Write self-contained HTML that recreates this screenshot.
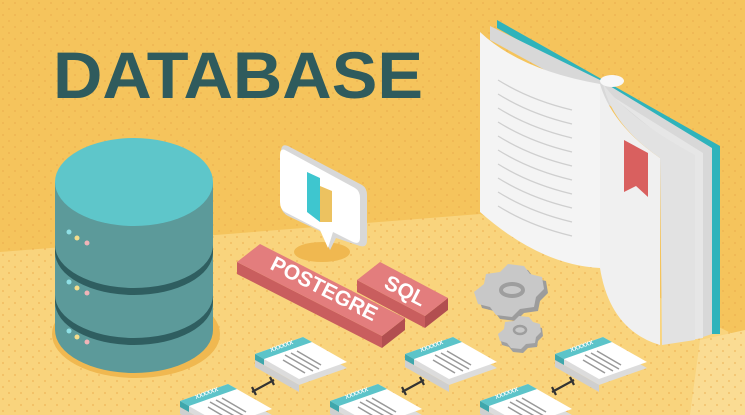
<!DOCTYPE html>
<html><head><style>html,body{margin:0;padding:0;width:745px;height:415px;overflow:hidden}svg{display:block;overflow:hidden}</style></head><body>
<svg width="745" height="415" viewBox="0 0 745 415" xmlns="http://www.w3.org/2000/svg">
<defs>
<pattern id="dots" width="12" height="12" patternUnits="userSpaceOnUse"><circle cx="3" cy="3" r="1.1" fill="#e9a94a" opacity="0.45"/><circle cx="9" cy="9" r="1.1" fill="#e9a94a" opacity="0.45"/></pattern>
<g id="card">
<polygon points="0,0 48,-17 92,8 44,25" fill="#dcdcdc"/>
<polygon points="0,0 44,25 44,32 0,7" fill="#cfcfcf"/>
<polygon points="0,-6 48,-23 92,2 44,19" fill="#ffffff"/>
<polygon points="0,-6 48,-23 57,-18 9,-1" fill="#5cc4c9"/>
<polygon points="0,-6 9,-1 9,5 0,0" fill="#3fa7ac"/>
<text x="0" y="0" transform="translate(16,-8) rotate(-20)" font-family="Liberation Sans,sans-serif" font-size="6" fill="#fff" font-weight="bold">XXXXXX</text>
<g stroke="#999" stroke-width="1.5"><line x1="28" y1="0" x2="50" y2="13"/><line x1="30" y1="-5" x2="58" y2="11"/><line x1="36" y1="-7" x2="64" y2="9"/><line x1="42" y1="-9" x2="66" y2="5"/></g>
</g>
</defs>
<rect width="745" height="415" fill="#f5c45c"/>
<polygon points="0,252 480,214 600,268 745,340 745,415 0,415" fill="#f9d47d"/>
<polygon points="700,340 745,330 745,415 690,415" fill="#fadc93"/>
<rect width="745" height="415" fill="url(#dots)"/>
<text x="53" y="98" font-family="Liberation Sans,sans-serif" font-weight="bold" font-size="66" fill="#2f5b5d" textLength="370" lengthAdjust="spacingAndGlyphs">DATABASE</text>
<ellipse cx="136" cy="334" rx="84" ry="44" fill="#f0b850"/>
<path d="M55,182 L55,330 A79,43 0 0 0 213,330 L213,182 Z" fill="#5c9a9a"/>
<path d="M55,245 A79,43 0 0 0 213,245 L213,252 A79,43 0 0 1 55,252 Z" fill="#2f5e60"/>
<path d="M55,295 A79,43 0 0 0 213,295 L213,302 A79,43 0 0 1 55,302 Z" fill="#2f5e60"/>
<ellipse cx="134" cy="182" rx="79" ry="44" fill="#5ec6ca"/>
<g><circle cx="69" cy="232" r="2.5" fill="#8fe0e6"/><circle cx="77" cy="238" r="2.5" fill="#f4dd8c"/><circle cx="87" cy="243" r="2.5" fill="#f0b4b8"/>
<circle cx="69" cy="282" r="2.5" fill="#8fe0e6"/><circle cx="77" cy="288" r="2.5" fill="#f4dd8c"/><circle cx="87" cy="293" r="2.5" fill="#f0b4b8"/>
<circle cx="69" cy="331" r="2.5" fill="#8fe0e6"/><circle cx="77" cy="337" r="2.5" fill="#f4dd8c"/><circle cx="87" cy="342" r="2.5" fill="#f0b4b8"/></g>
<ellipse cx="322" cy="252" rx="28" ry="10" fill="#f0b850"/>
<path d="M288,146 L362,185 Q367,188 367,195 L367,240 Q367,248 360,246 L336,238 L330,250 L322,232 L288,216 Q281,212 281,205 L281,152 Q281,143 288,146 Z" fill="#d8d8d8"/>
<path d="M285,150 L355,188 Q360,191 360,198 L360,238 Q360,245 353,242 L333,232 L328,248 L320,230 L285,212 Q280,209 280,202 L280,155 Q280,148 285,150 Z" fill="#ffffff"/>
<polygon points="307,172 320,178 320,222 307,212" fill="#3ec6cf"/>
<polygon points="320,186 332,191 332,222 320,222" fill="#ecc260"/>
<polygon points="237,262 382,336 382,348 237,274" fill="#c95e5e"/>
<polygon points="382,336 405,318 405,330 382,348" fill="#b24f50"/>
<polygon points="237,262 260,244 405,318 382,336" fill="#e37d7d"/>
<text transform="translate(321,295) rotate(27)" text-anchor="middle" font-family="Liberation Sans,sans-serif" font-weight="bold" font-size="21" fill="#fff">POSTEGRE</text>
<polygon points="357,280 425,316 425,328 357,292" fill="#c95e5e"/>
<polygon points="425,316 448,298 448,310 425,328" fill="#b24f50"/>
<polygon points="357,280 380,262 448,298 425,316" fill="#e37d7d"/>
<text transform="translate(402,297) rotate(27)" text-anchor="middle" font-family="Liberation Sans,sans-serif" font-weight="bold" font-size="21" fill="#fff">SQL</text>
<path d="M478,296 l10,-8 l2,-10 l14,-2 l8,-8 l16,2 l6,8 l12,3 l2,12 l-8,8 l-2,10 l-14,2 l-8,8 l-16,-2 l-6,-8 l-12,-3 z" fill="#9c9c9c"/>
<path d="M474,292 l10,-8 l2,-10 l14,-2 l8,-8 l16,2 l6,8 l12,3 l2,12 l-8,8 l-2,10 l-14,2 l-8,8 l-16,-2 l-6,-8 l-12,-3 z" fill="#c8c8c8"/>
<ellipse cx="512" cy="290" rx="11" ry="6" fill="none" stroke="#9e9e9e" stroke-width="4"/>
<path d="M500,338 l6,-5 l1,-7 l9,-1 l5,-5 l10,1 l4,5 l7,2 l1,8 l-5,5 l-1,6 l-9,1 l-5,5 l-10,-1 l-4,-5 l-7,-2 z" fill="#a0a0a0"/>
<path d="M498,334 l6,-5 l1,-7 l9,-1 l5,-5 l10,1 l4,5 l7,2 l1,8 l-5,5 l-1,6 l-9,1 l-5,5 l-10,-1 l-4,-5 l-7,-2 z" fill="#c8c8c8"/>
<ellipse cx="520" cy="330" rx="6" ry="4" fill="none" stroke="#9e9e9e" stroke-width="2.5"/>
<polygon points="497,20 720,146 720,334 712,334 712,150 497,28" fill="#2fb3bb"/>
<polygon points="490,26 600,80 712,148 712,334 700,338 700,158 600,100 490,40" fill="#d8d8d8"/>
<polygon points="610,95 703,153 703,338 690,340 690,160" fill="#e6e6e6"/>
<path d="M480,32 Q520,70 600,84 L600,268 Q540,265 480,212 Z" fill="#f4f4f4"/>
<g stroke="#cfcfcf" stroke-width="1.3" fill="none">
<path d="M498,80 Q530,100 572,110"/><path d="M498,94 Q530,114 572,124"/><path d="M498,108 Q530,128 572,138"/><path d="M498,122 Q530,142 572,152"/><path d="M498,136 Q530,156 572,166"/><path d="M498,150 Q530,170 572,180"/><path d="M498,164 Q530,184 572,194"/><path d="M498,178 Q530,198 572,208"/><path d="M498,192 Q530,212 572,222"/><path d="M498,206 Q530,226 572,236"/></g>
<path d="M600,84 Q612,125 660,158 L660,345 Q610,330 600,268 Z" fill="#f0f0f0"/>
<path d="M603,84 Q630,120 695,155 L695,340 L662,345 L660,158 Q612,125 603,84 Z" fill="#e2e2e2"/>
<ellipse cx="612" cy="81" rx="12" ry="6" fill="#f7f7f7"/>
<polygon points="624,140 648,153 648,197 636,186 624,192" fill="#d9605f"/>
<use href="#card" x="255" y="360"/>
<use href="#card" x="180" y="407"/>
<use href="#card" x="405" y="360"/>
<use href="#card" x="330" y="407"/>
<use href="#card" x="555" y="360"/>
<use href="#card" x="480" y="407"/>
<g stroke="#333" stroke-width="2.2" fill="none">
<line x1="252" y1="392" x2="274" y2="380"/><line x1="252" y1="387" x2="256" y2="395"/><line x1="270" y1="377" x2="274" y2="385"/>
<line x1="402" y1="392" x2="424" y2="380"/><line x1="402" y1="387" x2="406" y2="395"/><line x1="420" y1="377" x2="424" y2="385"/>
<line x1="552" y1="392" x2="574" y2="380"/><line x1="552" y1="387" x2="556" y2="395"/><line x1="570" y1="377" x2="574" y2="385"/>
</g>
</svg>
</body></html>
